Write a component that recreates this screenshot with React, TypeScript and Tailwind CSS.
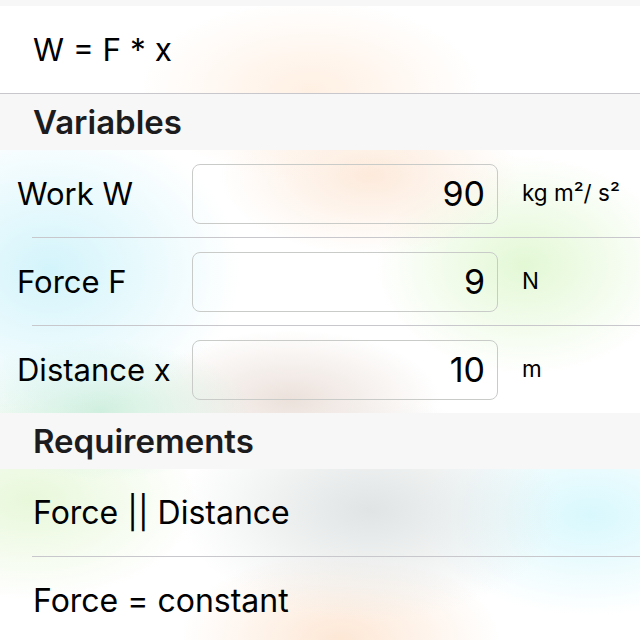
import React from "react";

const VARIABLES = [
    { label: "Work W", value: "90", unit: "kg m²/ s²" },
    { label: "Force F", value: "9", unit: "N" },
    { label: "Distance x", value: "10", unit: "m" },
];

const REQUIREMENTS = ["Force || Distance", "Force = constant"];

function SectionHeader({ title }: { title: string }) {
    return (
        <div className="h-[56px] bg-[#f7f7f7] flex items-center px-[33px]">
            <span className="text-[33px] font-semibold text-[#1c1c1e] leading-none">{title}</span>
        </div>
    );
}

function Separator() {
    return <div className="ml-[32px] h-px bg-[#c8c7cc]" />;
}

export default function App() {
    return (
        <div className="w-[640px] h-[640px] overflow-hidden bg-white bg-[radial-gradient(170px_90px_at_310px_90px,#fff0e3,transparent),radial-gradient(150px_80px_at_370px_175px,#fdeadb,transparent),radial-gradient(190px_150px_at_50px_270px,#d3f4fb,transparent),radial-gradient(150px_110px_at_525px_265px,#e3f8d5,transparent),radial-gradient(150px_70px_at_100px_410px,#d0efde,transparent),radial-gradient(150px_70px_at_290px_400px,#ece1db,transparent),radial-gradient(170px_100px_at_30px_500px,#e8f8da,transparent),radial-gradient(190px_110px_at_370px_510px,#e0e4e4,transparent),radial-gradient(170px_100px_at_590px_515px,#d8f8fd,transparent),radial-gradient(160px_90px_at_340px_640px,#fde7d5,transparent)] font-[Inter,sans-serif] text-black">
            <div className="h-[6px] bg-[#f7f7f7]" />

            {/* Formula */}
            <div className="h-[88px] flex items-center px-[33px] border-b border-[#c8c7cc]">
                <span className="text-[31.5px] leading-none">W = F * x</span>
            </div>

            <SectionHeader title="Variables" />

            {VARIABLES.map((v, i) => (
                <React.Fragment key={v.label}>
                    <div className="h-[87px] flex items-center">
                        <div className="w-[192px] pl-[17px] text-[31px] leading-none whitespace-nowrap">{v.label}</div>
                        <div className="w-[306px] h-[60px] rounded-[8px] border border-[#c9cbc9] flex items-center justify-end pr-[12px]">
                            <span className="text-[34px] leading-none">{v.value}</span>
                        </div>
                        <div className="pl-[24px] text-[22.5px] leading-none whitespace-nowrap">{v.unit}</div>
                    </div>
                    {i < VARIABLES.length - 1 && <Separator />}
                </React.Fragment>
            ))}

            <SectionHeader title="Requirements" />

            {REQUIREMENTS.map((r, i) => (
                <React.Fragment key={r}>
                    <div className="h-[87px] flex items-center px-[33px]">
                        <span className="text-[32px] leading-none">{r}</span>
                    </div>
                    {i < REQUIREMENTS.length - 1 && <Separator />}
                </React.Fragment>
            ))}
        </div>
    );
}
